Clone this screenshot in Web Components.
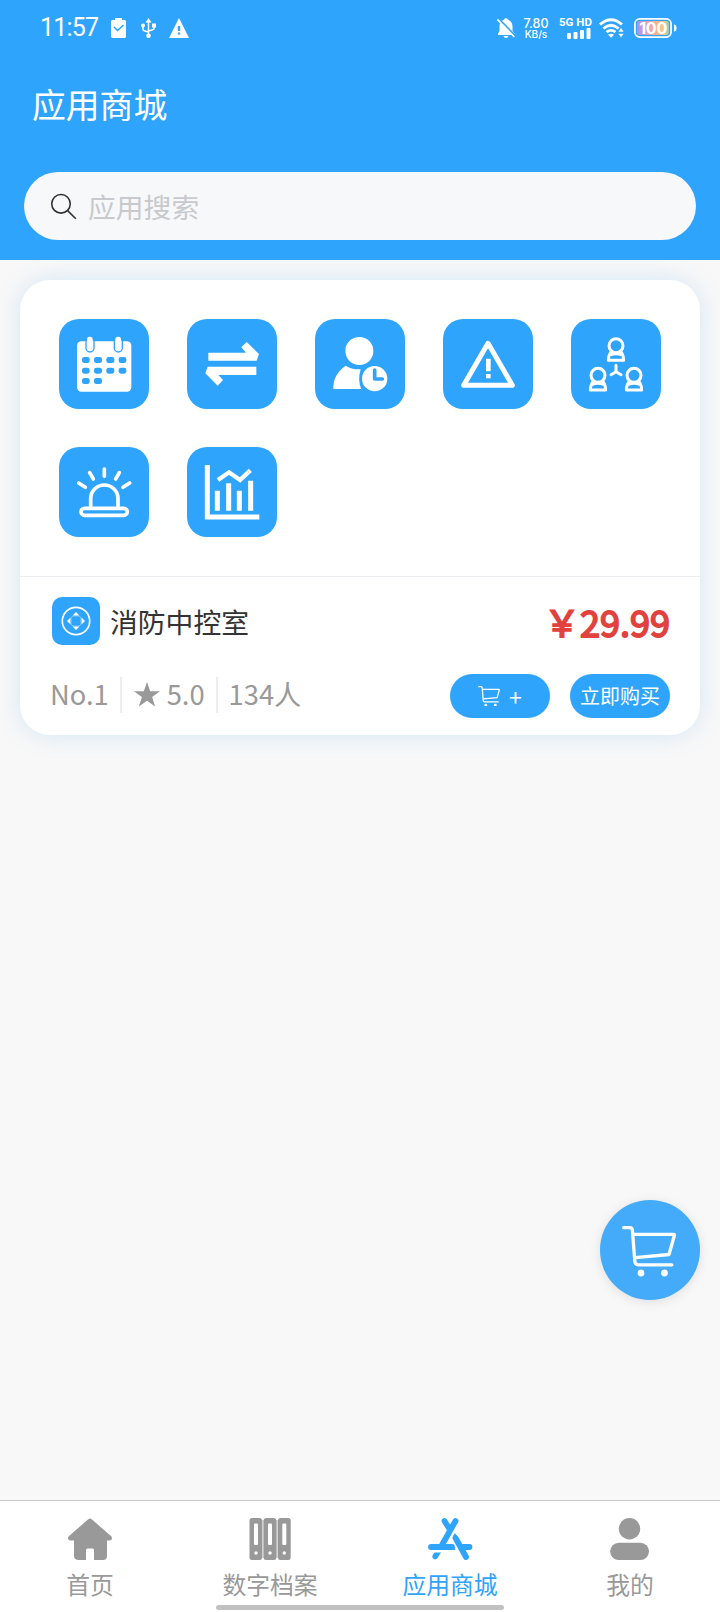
<!DOCTYPE html>
<html lang="zh-CN">
<head>
<meta charset="UTF-8">
<meta name="viewport" content="width=device-width, initial-scale=1">
<title>应用商城</title>
<style>
    html, body {
        margin: 0;
        padding: 0;
        height: 100%;
    }
    body {
        --blue: #2fa4fd;
        --grey: #999;
        background: #f8f8f8;
        color: #333;
        font-family: "Noto Sans CJK SC", sans-serif;
    }
</style>
</head>
<body>
<store-app></store-app>

<script>
    class BaseElement extends HTMLElement {
        constructor() {
            super();
            this._shadowdom = this.attachShadow({ mode: 'open' });
        }

        connectedCallback() {
            this._shadowdom.innerHTML = this.styles() + this.markup();
        }
    }

    class StatusBar extends BaseElement {
        styles() {
            return /* html */ `
            <style>
                :host {
                    display: flex;
                    align-items: center;
                    height: 56px;
                    padding: 0 43px 0 40px;
                    box-sizing: border-box;
                    color: white;
                    font-family: Roboto, sans-serif;
                }
                svg { display: block; flex: none; }
                .time { width: 71px; font-size: 25px; line-height: 28px; letter-spacing: -0.8px; }
                .usb { margin: 0 13px 0 15px; }
                .right { display: flex; align-items: center; margin-left: auto; }
                .speed { display: flex; flex-direction: column; align-items: center; width: 26px; margin: 0 10px 0 8px; font: 500 12.5px/11px Inter, sans-serif; }
                .speed small { margin-top: 1px; font-size: 10px; line-height: 9px; }
                .net { width: 33px; margin-right: 7px; font: 700 11.500px/11px Roboto, sans-serif; white-space: nowrap; }
                .net svg { margin: 0 0 0 8px; }
            </style>`;
        }

        markup() {
            return /* html */ `
            <span class="time">11:57</span>
            <svg width="15" height="20" viewBox="0 0 15 20">
                <path fill="#fff" d="M1 2h3V0h7v2h3l1 1v16l-1 1H1l-1-1V3z"/>
                <path d="M3 9l3.500 3.500L12.500 7" fill="none" stroke="#2fa4fd" stroke-width="1.6"/>
            </svg>
            <svg class="usb" width="15" height="20" viewBox="0 0 15 20" fill="none" stroke="#fff" stroke-width="1.5">
                <path d="M7.500 3v14M2 8v3.200q0 1.300 1.300 1.600l4.200 1.200M13 8v2.200q0 1.300-1.300 1.600L7.500 13"/>
                <path d="M7.500 0l3 4.500h-6zM11 5.500h4v4h-4z" fill="#fff" stroke="none"/>
                <circle cx="2" cy="7.500" r="2" fill="#fff" stroke="none"/>
                <circle cx="7.500" cy="17.700" r="2.300" fill="#fff" stroke="none"/>
            </svg>
            <svg width="20" height="20" viewBox="0 0 20 20">
                <path fill="#fff" d="M10 0l10 20H0z"/>
                <path d="M10 8v5M10 14.500v2" stroke="#2fa4fd" stroke-width="2.400"/>
            </svg>
            <div class="right">
                <svg width="18" height="20" viewBox="0 0 18 20">
                    <path fill="#fff" d="M9 0q1.500 0 1.700 1.600Q15 3 15.500 8v5l2 2.500V17H1v-1.500L2.500 13V8q0-5 4.800-6.400Q7.500 0 9 0zM6.500 18h5q-.5 2-2.500 2t-2.500-2z"/>
                    <path d="M1 .2l17 17.600" stroke="#2fa4fd" stroke-width="2.200"/>
                    <path d="M.4 1.400l17 17.600" stroke="#fff" stroke-width="1.700"/>
                </svg>
                <div class="speed"><span>7.80</span><small>KB/s</small></div>
                <div class="net">5G HD
                    <svg width="24" height="11" viewBox="0 0 24 11" fill="#fff">
                        <rect y="5" width="4" height="6" rx="1"/>
                        <rect x="6.500" y="4" width="4" height="7" rx="1"/>
                        <rect x="13" y="2" width="4" height="9" rx="1"/>
                        <rect x="19.500" width="4" height="11" rx="1"/>
                    </svg>
                </div>
                <svg width="25" height="20" viewBox="0 0 25 20">
                    <g fill="none" stroke="#fff" stroke-width="2.800">
                        <path d="M1 6.500q11-9.500 22 0M4.300 10.500q7.700-6.600 15.400 0M7.600 14.200q4.400-3.600 8.800 0"/>
                    </g>
                    <path fill="#fff" d="M9 16.800q3-2.200 6 0l-3 3z"/>
                    <path fill="#fff" stroke="#2fa4fd" stroke-width=".6" d="M22 9.500l3 4.500h-6zM22 20l3-4.500h-6z"/>
                </svg>
                <svg width="43" height="20" viewBox="0 0 43 20" style="margin-left: 10px">
                    <defs>
                        <linearGradient id="charge">
                            <stop offset="0" stop-color="#a993ee"/>
                            <stop offset=".35" stop-color="#e5a5bd"/>
                            <stop offset=".6" stop-color="#f5b38c"/>
                            <stop offset=".85" stop-color="#f2cc83"/>
                            <stop offset="1" stop-color="#90cbd0"/>
                        </linearGradient>
                    </defs>
                    <rect x=".9" y=".9" width="36.200" height="18.200" rx="5" fill="none" stroke="#fff" stroke-width="1.800"/>
                    <rect x="3" y="3" width="32" height="14" rx="3" fill="url(#charge)"/>
                    <path d="M40 6.500q2.500 0 2.500 3.500T40 13.500z" fill="#fff"/>
                    <text x="19.200" y="16" text-anchor="middle" fill="#fff" font-family="Inter" font-weight="700" font-size="16" textLength="28">100</text>
                </svg>
            </div>`;
        }
    }

    class SearchBox extends BaseElement {
        styles() {
            return /* html */ `
            <style>
                :host {
                    display: flex;
                    align-items: center;
                    height: 68px;
                    padding-left: 26px;
                    box-sizing: border-box;
                    border-radius: 34px;
                    background: #f7f8fa;
                    color: #c8c9cc;
                    font-size: 27.800px;
                    line-height: 40px;
                }
                svg { margin-right: 11px; }
            </style>`;
        }

        markup() {
            return /* html */ `
            <svg width="27" height="27" viewBox="0 0 27 27" fill="none" stroke="#323233" stroke-width="1.600">
                <circle cx="11" cy="10.800" r="9.300"/>
                <path d="M17.600 17.600l8.200 8.200"/>
            </svg>
            <slot></slot>`;
        }
    }

    class StoreHeader extends BaseElement {
        styles() {
            return /* html */ `
            <style>
                :host {
                    display: block;
                    height: 260px;
                    background: var(--blue);
                }
                h1 {
                    margin: 0;
                    padding: 0 32px;
                    height: 116px;
                    color: white;
                    font-size: 33.800px;
                    font-weight: 400;
                    line-height: 95px;
                }
                search-box { margin: 0 24px; }
            </style>`;
        }

        markup() {
            return /* html */ `
            <status-bar></status-bar>
            <h1><slot></slot></h1>
            <search-box>应用搜索</search-box>`;
        }
    }

    const tileIcons = {
        calendar: /* html */ `
            <rect x="54" y="67" width="163" height="151" rx="13" fill="#fff"/>
            <g fill="#fff" stroke="#2fa4fd" stroke-width="4">
                <rect x="81" y="50" width="24" height="49" rx="12"/>
                <rect x="166" y="50" width="24" height="49" rx="12"/>
            </g>
            <path d="M79 47h28v18H79zM164 47h28v18h-28z" fill="#2fa4fd"/>
            <rect x="84" y="53" width="17" height="42" rx="8" fill="#fff"/>
            <rect x="169" y="53" width="17" height="42" rx="8" fill="#fff"/>
            <g fill="#2fa4fd">
                <rect x="69" y="114" width="23" height="18" rx="7"/><rect x="105" y="114" width="24" height="18" rx="7"/><rect x="142" y="114" width="24" height="18" rx="7"/><rect x="179" y="114" width="23" height="18" rx="7"/>
                <rect x="69" y="146" width="23" height="18" rx="7"/><rect x="105" y="146" width="24" height="18" rx="7"/><rect x="142" y="146" width="24" height="18" rx="7"/><rect x="179" y="146" width="23" height="18" rx="7"/>
                <rect x="69" y="177" width="23" height="18" rx="7"/><rect x="105" y="177" width="24" height="18" rx="7"/>
            </g>`,
        transfer: /* html */ `
            <path fill="#fff" d="M64 101h113l-14-16 16-16 37 36-7 20H64zM208 168H94l14 15-16 17-37-37 7-20h146z"/>`,
        duty: /* html */ `
            <circle cx="133" cy="96" r="42" fill="#fff"/>
            <path d="M55 210q-2-43 37-70 17 12 45 11-10 34 2 59z" fill="#fff"/>
            <circle cx="179" cy="179" r="43" fill="#2fa4fd"/>
            <circle cx="179" cy="179" r="38" fill="#fff"/>
            <path d="M179 153v27h23" fill="none" stroke="#2fa4fd" stroke-width="11" stroke-linecap="round" stroke-linejoin="round"/>`,
        warning: /* html */ `
            <path d="M135 73l73 126H62z" fill="none" stroke="#fff" stroke-width="15" stroke-linejoin="round"/>
            <path d="M136 119v38M136 165v13" stroke="#fff" stroke-width="14"/>`,
        team: /* html */ `
            <g fill="none" stroke="#fff" stroke-width="9" stroke-linejoin="round">
                <g id="person">
                    <circle cx="135" cy="80" r="21"/>
                    <path d="M121 97l-4 7q-5 8-5 20h46q0-12-5-20l-4-7M119 107q16-6 32 0"/>
                </g>
                <use href="#person" x="-54" y="89"/>
                <use href="#person" x="54" y="89"/>
                <path d="M135 139v19l-15 9M135 158l15 9" stroke-linecap="round"/>
            </g>`,
        alarm: /* html */ `
            <g fill="none" stroke="#fff" stroke-width="11" stroke-linecap="round">
                <rect x="66" y="184" width="139" height="21" rx="10.500"/>
                <path d="M95 182v-27a41 41 0 0 1 82 0v27"/>
                <path d="M136 66v22M92 77l11 19M181 77l-11 19M59 108l20 13M212 108l-20 13"/>
            </g>`,
        chart: /* html */ `
            <g fill="none" stroke="#fff" stroke-width="15">
                <path d="M61 54v156h156M91 131v60M125 109v82M157 131v60M191 101v90"/>
                <path d="M93 99l33-23 33 23 31-29" stroke-width="13"/>
            </g>`
    };

    class AppTile extends BaseElement {
        styles() {
            return /* html */ `
            <style>
                :host {
                    display: block;
                    width: 90px;
                    height: 90px;
                    border-radius: 20px;
                    background: var(--blue);
                }
                svg { display: block; }
            </style>`;
        }

        markup() {
            return `<svg width="90" height="90" viewBox="0 0 270 270">${tileIcons[this.getAttribute('icon')]}</svg>`;
        }
    }

    // Bounds: 54 x 51, shared by the buy button and the floating button
    const cartIcon = (size, stroke) => /* html */ `
        <svg width="${size}" height="${size * 51 / 54}" viewBox="0 0 54 51" fill="none" stroke="#fff" stroke-width="${stroke}" stroke-linecap="round" stroke-linejoin="round">
            <path d="M1.700 1.700h6q2.500 0 2.700 2.500l2.400 31q.3 3.600 3.500 3.600h33.500M11 8.300h40.500q1.200 0 .8 1.500L47 28.500 13.500 31.700"/>
            <circle cx="19" cy="47" r="3.400" fill="#fff" stroke="none"/>
            <circle cx="42.500" cy="47" r="3.400" fill="#fff" stroke="none"/>
        </svg>`;

    class PillButton extends BaseElement {
        styles() {
            return /* html */ `
            <style>
                :host {
                    display: flex;
                    align-items: center;
                    justify-content: center;
                    width: 100px;
                    height: 44px;
                    border-radius: 22px;
                    background: var(--blue);
                    color: white;
                    font-size: 20px;
                    line-height: 44px;
                    white-space: nowrap;
                }
                :host([cart]) { font-size: 23px; }
                svg { margin-right: 9px; }
            </style>`;
        }

        markup() {
            return (this.hasAttribute('cart') ? cartIcon(22, 3) : '') + '<slot></slot>';
        }
    }

    class ProductCard extends BaseElement {
        styles() {
            return /* html */ `
            <style>
                :host {
                    display: block;
                    height: 455px;
                    margin: 20px 20px 0;
                    border-radius: 30px;
                    background: white;
                    box-shadow: 0 0 24px rgba(47, 150, 240, 0.18);
                }
                .tiles {
                    display: grid;
                    grid-template-columns: repeat(5, 90px);
                    gap: 38px;
                    height: 297px;
                    padding: 39px 39px 0;
                    box-sizing: border-box;
                    border-bottom: 1px solid #ebedf0;
                    align-content: start;
                }
                .title, .meta {
                    display: flex;
                    align-items: center;
                    padding: 0 30px 0 32px;
                }
                .title { height: 48px; margin-top: 20px; font-size: 27.800px; }
                .badge { margin-right: 10px; border-radius: 10px; background: var(--blue); }
                /* Regular digits thickened by a stroke keep their narrow widths */
                .price { margin-left: auto; color: #e2423e; font-size: 36px; line-height: 48px; -webkit-text-stroke: 1.800px #e2423e; }
                .meta { height: 44px; margin-top: 29px; padding-left: 30px; color: var(--grey); font-size: 27.300px; }
                .meta span { height: 36px; line-height: 32px; margin-top: -2px; }
                .meta span + span { margin-left: 11px; padding-left: 11px; border-left: 2px solid #ebedf0; }
                .star { vertical-align: -2px; margin: 0 7px 0 1px; }
                pill-button:first-of-type { margin: 0 20px 0 auto; }
            </style>`;
        }

        markup() {
            const tiles = this.getAttribute('icons').split(' ')
                .map((icon) => `<app-tile icon="${icon}"></app-tile>`).join('');

            return /* html */ `
            <div class="tiles">${tiles}</div>
            <div class="title">
                <svg class="badge" width="48" height="48" viewBox="0 0 48 48">
                    <circle cx="24" cy="24" r="13.700" fill="none" stroke="#fff" stroke-width="1.700"/>
                    <path fill="#fff" d="M24 15l3.500 3.500h-7zM24 33l3.500-3.500h-7zM15 24l3.500-3.500v7zM33 24l-3.500-3.500v7z"/>
                    <rect x="19" y="19" width="10" height="10" rx="3" fill="none" stroke="#fff" stroke-opacity=".35"/>
                </svg>
                <slot></slot>
                <span class="price">${this.getAttribute('price')}</span>
            </div>
            <div class="meta">
                <span>${this.getAttribute('rank')}</span>
                <span><svg class="star" width="26" height="25" viewBox="0 0 26 25"><path fill="#999" d="M13 0l3.200 9.200H26l-7.900 5.900 3 9.400L13 18.800l-8.100 5.700 3-9.400L0 9.200h9.800z"/></svg>${this.getAttribute('score')}</span>
                <span>${this.getAttribute('users')}</span>
                <pill-button cart>+</pill-button>
                <pill-button>立即购买</pill-button>
            </div>`;
        }
    }

    class CartFab extends BaseElement {
        styles() {
            return /* html */ `
            <style>
                /* Floats over the page content */
                :host {
                    position: absolute;
                    right: 20px;
                    bottom: 312px;
                    display: flex;
                    align-items: center;
                    justify-content: center;
                    width: 100px;
                    height: 100px;
                    border-radius: 50%;
                    background: #43abf9;
                    box-shadow: 0 2px 12px rgba(0, 0, 0, 0.1);
                }
                svg { margin: 3px 3px 0 0; }
            </style>`;
        }

        markup() {
            return cartIcon(54, 3.3);
        }
    }

    const tabIcons = {
        home: '<path fill="currentColor" d="M20 1.500q2-1.800 4 0l19.500 17q1.500 4-2 4H39V38q0 4-4 4h-9V32q0-1.500-1.500-1.500h-5Q18 30.500 18 32v10h-7q-5 0-5-4V22.500H2.500q-3.500 0-2-4z"/>',
        files: `
            <path fill="#d2d2d2" d="M10 2h24v38H10z"/>
            <g fill="currentColor"><rect x="1.500" width="12.500" height="42" rx="2.500"/><rect x="15.700" width="12.600" height="42" rx="2.500"/><rect x="30" width="12.700" height="42" rx="2.500"/></g>
            <g fill="#fff"><rect x="6" y="5.500" width="4" height="21.500" rx="1"/><rect x="20" y="5.500" width="4" height="21.500" rx="1"/><rect x="34.300" y="5.500" width="4" height="21.500" rx="1"/><circle cx="8" cy="35" r="1.700"/><circle cx="22" cy="35" r="1.700"/><circle cx="36.300" cy="35" r="1.700"/></g>`,
        store: `
            <g fill="none" stroke="currentColor" stroke-width="5.800" stroke-linecap="round">
                <path d="M16.500 3l5 8M27.500 3L14 27M3 29h21M27.500 20l10.500 19M35 29h6.500"/>
            </g>
            <path fill="currentColor" d="M6.500 34.500h6.500l-3.300 5.300q-1.600 2.300-4 1.300-2.200-1.600-1-4zM25 20.500q-.6-3 2-5.500l3 5zM22 26.200h2.300q2 1.800 3 5.700H22z"/>`,
        mine: '<g fill="currentColor"><circle cx="21.500" cy="10.800" r="10.700"/><rect x="2.200" y="24.700" width="38.800" height="17.300" rx="8.650"/></g>'
    };

    class TabItem extends BaseElement {
        styles() {
            return /* html */ `
            <style>
                :host {
                    display: flex;
                    flex: 1;
                    flex-direction: column;
                    align-items: center;
                    padding-top: 17px;
                    color: var(--grey);
                    font-size: 23.800px;
                    line-height: 36px;
                }
                :host([active]) { color: var(--blue); }
                svg { display: block; margin-bottom: 6px; overflow: visible; }
            </style>`;
        }

        markup() {
            return `<svg width="44" height="42" viewBox="0 0 44 42">${tabIcons[this.getAttribute('icon')]}</svg><slot></slot>`;
        }
    }

    class TabBar extends BaseElement {
        styles() {
            return /* html */ `
            <style>
                :host {
                    position: relative;
                    display: flex;
                    height: 112px;
                    box-sizing: border-box;
                    border-top: 1px solid #c8c8c8;
                    background: white;
                }
                /* System gesture handle, drawn over the tabs */
                .handle {
                    position: absolute;
                    left: 50%;
                    bottom: 2px;
                    width: 288px;
                    height: 5px;
                    margin-left: -144px;
                    border-radius: 3px;
                    background: #c1c1c1;
                }
            </style>`;
        }

        markup() {
            return '<slot></slot><div class="handle"></div>';
        }
    }

    class StoreApp extends BaseElement {
        styles() {
            return /* html */ `
            <style>
                :host {
                    position: relative;
                    display: flex;
                    flex-direction: column;
                    height: 1612px;
                    overflow: hidden;
                }
                main { flex: 1; overflow: hidden; }
            </style>`;
        }

        markup() {
            return /* html */ `
            <store-header>应用商城</store-header>
            <main>
                <product-card icons="calendar transfer duty warning team alarm chart"
                    price="￥29.99" rank="No.1" score="5.0" users="134人">消防中控室</product-card>
            </main>
            <tab-bar>
                <tab-item icon="home">首页</tab-item>
                <tab-item icon="files">数字档案</tab-item>
                <tab-item icon="store" active>应用商城</tab-item>
                <tab-item icon="mine">我的</tab-item>
            </tab-bar>
            <cart-fab></cart-fab>`;
        }
    }

    customElements.define('status-bar', StatusBar);
    customElements.define('search-box', SearchBox);
    customElements.define('store-header', StoreHeader);
    customElements.define('app-tile', AppTile);
    customElements.define('pill-button', PillButton);
    customElements.define('product-card', ProductCard);
    customElements.define('cart-fab', CartFab);
    customElements.define('tab-item', TabItem);
    customElements.define('tab-bar', TabBar);
    customElements.define('store-app', StoreApp);
</script>
</body>
</html>
